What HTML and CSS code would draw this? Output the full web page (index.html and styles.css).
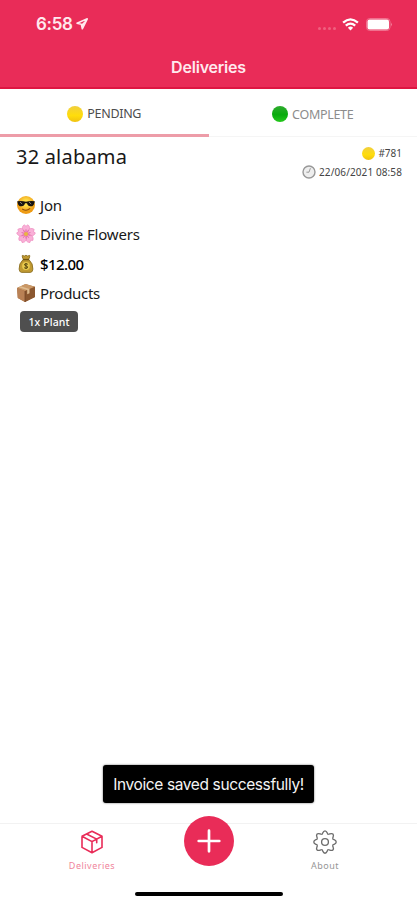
FILE: index.html
```html
<!DOCTYPE html>
<html lang="en">
<head>
<meta charset="utf-8">
<title>Deliveries</title>
<link rel="stylesheet" href="styles.css">
</head>
<body>
<div class="app">
  <header class="header">
    <div class="status">
      <span class="time">6:58</span>
      <svg class="location" width="12" height="12" viewBox="0 0 12 12"><path d="M11.3.8 1 5.3l4.3 1 1 4.5z" fill="none" stroke="#ffe9ee" stroke-width="1.5" stroke-linejoin="round"/><path d="M11 1 5.6 6.2 6.4 10.4z" fill="#ffe9ee"/></svg>
      <span class="signal"><i></i><i></i><i></i><i></i></span>
      <svg class="wifi" width="17" height="13" viewBox="0 0 17 13"><g fill="none" stroke="#fff" stroke-width="2.3"><path d="M1.1 4.7Q8.5-1.9 15.9 4.7"/><path d="M3.8 7.7Q8.5 3.6 13.2 7.7"/></g><path d="M5.9 9.7Q8.5 7.5 11.1 9.7L8.5 12.5z" fill="#fff"/></svg>
      <svg class="battery" width="27" height="13" viewBox="0 0 27 13"><rect x=".5" y=".5" width="23.5" height="12" rx="3.2" fill="none" stroke="#f0708e"/><rect x="1.5" y="1.5" width="21.5" height="10" rx="2" fill="#fff"/><path d="M25.2 4.6q1.5 1.9 0 3.8z" fill="#f6a0b3"/></svg>
    </div>
    <h1 class="title">Deliveries</h1>
  </header>

  <nav class="tabs">
    <div class="tab active"><span class="dot yellow"></span><span>PENDING</span></div>
    <div class="tab"><span class="dot green"></span><span>COMPLETE</span></div>
  </nav>

  <main class="order">
    <div class="order-head">
      <h2 class="address"><span>32 alabama</span></h2>
      <div class="meta">
        <div class="meta-row"><span class="dot small yellow"></span><span class="number">#781</span></div>
        <div class="meta-row"><svg width="14" height="14" viewBox="0 0 14 14"><circle cx="7" cy="7" r="6" fill="#eee" stroke="#989898" stroke-width="1.4"/><path d="M8.4 3.2 7 7.2H4.4" fill="none" stroke="#888" stroke-width=".8"/></svg><span class="date">22/06/2021 08:58</span></div>
      </div>
    </div>
    <ul class="details">
      <li>
        <svg width="20" height="20" viewBox="0 0 20 20"><defs><radialGradient id="face" cy=".38"><stop offset=".3" stop-color="#ffdf48"/><stop offset="1" stop-color="#ee9b14"/></radialGradient></defs><circle cx="10" cy="10" r="9" fill="url(#face)"/><path d="M1.2 6.3Q5.5 5.3 10 6.7 14.5 5.3 18.8 6.3L18.3 8.2Q17.5 11.6 14.5 11.3 11.7 11.2 11 8.3H9Q8.3 11.2 5.5 11.3 2.5 11.6 1.7 8.2z" fill="#17130f"/><path d="m4 7 2.2 2M13 7l2.2 2" stroke="#8d8a80"/><path d="M6.6 14.2Q10.5 16.5 13.8 13.7" fill="none" stroke="#8a4a0a" stroke-width="1.1" stroke-linecap="round"/></svg>
        <span class="name">Jon</span>
      </li>
      <li>
        <svg width="20" height="20" viewBox="0 0 20 20"><defs><path id="petal" d="M10 10C5.5 7 5.3 2.7 8.2.8L10 2.2 11.8.8C14.7 2.7 14.5 7 10 10z" fill="#f9b0d7" stroke="#ed83bb" stroke-width=".6"/></defs><use href="#petal"/><use href="#petal" transform="rotate(72 10 10)"/><use href="#petal" transform="rotate(144 10 10)"/><use href="#petal" transform="rotate(216 10 10)"/><use href="#petal" transform="rotate(288 10 10)"/><path d="M10 5.4v9.2M5.6 8.5l8.8 3M14.4 8.5l-8.8 3M7.3 13.7l5.4-7.4M12.7 13.7 7.3 6.3" stroke="#d44e92" stroke-width=".7"/><circle cx="10" cy="10" r="2.1" fill="#e9b544"/></svg>
        <span class="shop">Divine Flowers</span>
      </li>
      <li>
        <svg width="20" height="20" viewBox="0 0 20 20"><path d="M7.3 5.3Q5.8 2.7 6.3 1.4L8.5 2 10 1.2 11.5 2l2.2-.6q.5 1.3-1 3.9 4.6 4.3 4.2 9.8-.3 3.3-2.5 3.3H5.6q-2.2 0-2.5-3.3Q2.7 9.6 7.3 5.3z" fill="#c09a32" stroke="#846719" stroke-width=".8"/><path d="M7 5.6h6" stroke="#725612" stroke-width="1.4"/><circle cx="10" cy="12" r="3.9" fill="#e8c94d"/><path d="M11.8 10.3q-1.5-1.1-3-.3-.9 1.3 1.2 1.9 2.4.6 1.4 2-1.6 1-3.2-.2M10 9v6" fill="none" stroke="#57470f" stroke-width="1"/></svg>
        <span class="price">$12.00</span>
      </li>
      <li>
        <svg width="20" height="20" viewBox="0 0 20 20"><path d="M1 5 9.5 1 19 3.7V14L9 19 1.8 15z" fill="#a86f42"/><path d="M1 5 9.5 1 19 3.7 9 8z" fill="#ca9866"/><path d="M1 5 9 8v11l-7.2-4z" fill="#b98155"/><path d="M9 8 19 3.7V14L9 19z" fill="#8b5730"/><path d="M4.6 3.3 13.5 6v4.2l-2.3 1V7L2.7 4.2z" fill="#e0bd91"/><path d="M9 8v11" stroke="#6d4122" stroke-width=".7"/></svg>
        <span class="products">Products</span>
      </li>
    </ul>
    <span class="chip"><span>1x Plant</span></span>
  </main>

  <footer class="tabbar">
    <div class="nav-item current">
      <svg width="24" height="24" viewBox="0 0 24 24" fill="none" stroke="currentColor" stroke-width="1.6" stroke-linejoin="round" stroke-linecap="round"><path d="M12 1.2 22 6.3V17.4L12 22.8 2 17.4V6.3zM2 6.3 12 11.6 22 6.3M12 11.6V22.8M6.6 4 16.7 9.1V12.7"/></svg>
      <span>Deliveries</span>
    </div>
    <div class="nav-item middle"></div>
    <div class="nav-item about">
      <svg width="24" height="24" viewBox="-12 -12 24 24" fill="none" stroke="currentColor" stroke-width="1.35"><defs><path id="tooth" d="M-3.2-7.7C-2.1-8.15-2.3-11.2 0-11.2S2.1-8.15 3.2-7.7"/></defs><use href="#tooth"/><use href="#tooth" transform="rotate(45)"/><use href="#tooth" transform="rotate(90)"/><use href="#tooth" transform="rotate(135)"/><use href="#tooth" transform="rotate(180)"/><use href="#tooth" transform="rotate(225)"/><use href="#tooth" transform="rotate(270)"/><use href="#tooth" transform="rotate(315)"/><circle r="3.4"/></svg>
      <span>About</span>
    </div>
    <button class="fab" aria-label="Add"><svg width="24" height="24" viewBox="0 0 24 24"><path d="M12 1.7v20.6M1.7 12h20.6" stroke="#fff" stroke-width="2.7" stroke-linecap="round"/></svg></button>
    <div class="home"></div>
  </footer>
  <div class="toast"><span>Invoice saved successfully!</span></div>
</div>
</body>
</html>
```
FILE: styles.css
```css
* { box-sizing: border-box; }
body { margin: 0; background: #fff; font-family: "Noto Sans", sans-serif; }
svg { display: block; flex: none; }
.app { position: relative; width: 417px; height: 900px; display: flex; flex-direction: column; overflow: hidden; }

.header { height: 89px; background: #e92c58; border-bottom: 2px solid #de1642; color: #ffe9ee; flex: none; }
.status { display: flex; align-items: center; height: 48px; padding: 0 25px 0 36px; }
.time { font: 600 17px/20px Inter, sans-serif; letter-spacing: -.3px; }
.location { margin-left: 3px; }
.signal { display: flex; gap: 2px; margin: 8px 6px 0 auto; }
.signal i { width: 3px; height: 3px; border-radius: 50%; background: #f0607f; }
.wifi { margin-right: 7px; }
.battery { margin-right: -1px; }
.title { margin: 9px 0 0; text-align: center; font: 600 16px/20px Inter, sans-serif; letter-spacing: -.2px; }

.tabs { display: flex; height: 48px; flex: none; border-bottom: 1px solid #f5f5f5; }
.tab { flex: 1; display: flex; align-items: center; justify-content: center; gap: 4px; color: #8c8c8c; font-size: 12.5px; padding-top: 3px; letter-spacing: -.3px; }
.tab.active { color: #4d4d4d; border-bottom: 3px solid #ed9ca8; margin-bottom: -1px; padding-top: 4px; }
.dot { width: 16px; height: 16px; border-radius: 50%; flex: none; }
.yellow { background: linear-gradient(#f1cf3e, #ffdd0b 60%, #f0c211); }
.green { background: linear-gradient(#2fab2f, #08ab0c 55%, #25c81d); }
.dot.small { width: 13px; height: 13px; }

.order { flex: 1; padding: 7px 16px 0; color: #181818; }
.order-head { display: flex; justify-content: space-between; height: 46px; }
.address { margin: 0; font-size: 20px; line-height: 25px; font-weight: 400; letter-spacing: .2px; }
.meta { display: flex; flex-direction: column; align-items: flex-end; font-size: 10px; color: #444; margin-right: -1px; }
.meta-row { display: flex; align-items: center; gap: 3px; height: 18.5px; }
.date { letter-spacing: .1px; }
.details { list-style: none; margin: 0; padding: 0; font-size: 15px; letter-spacing: -.15px; }
.details li { display: flex; align-items: center; gap: 4px; height: 29.5px; }
.products { letter-spacing: -.3px; }
.price { font-weight: 500; color: #000; letter-spacing: -.6px; }
.chip { display: flex; align-items: center; justify-content: center; width: 58px; height: 21px; margin: 3px 0 0 4px; border-radius: 4px; background: #4f4f4f; color: #fff; font-size: 10.5px; font-weight: 500; letter-spacing: .1px; }

.tabbar { position: relative; display: flex; flex-wrap: wrap; height: 77px; flex: none; border-top: 1px solid #f2f2f2; }
.nav-item { height: 49px; display: flex; flex-direction: column; align-items: center; padding-top: 6px; gap: 5px; font: 9px/13px "Noto Sans", sans-serif; letter-spacing: .5px; color: #969696; }
.nav-item.current { width: 184px; color: #e92c58; }
.current span { color: #f0849b; }
.nav-item.middle { width: 49px; }
.nav-item.about { width: 184px; }
.about svg { color: #6c6c6c; }
.fab { position: absolute; left: 184px; top: -8px; width: 50px; height: 50px; padding: 0; border: 0; border-radius: 50%; background: #e92c58; display: grid; place-items: center; }
.home { width: 148px; height: 4px; border-radius: 2px; background: #000; margin: 14px auto 0; }
.toast { position: absolute; left: 103px; top: 765px; width: 211px; height: 38px; padding-top: 1px; border-radius: 3px; background: #000; box-shadow: 0 0 2px #555; color: #f4f4f4; display: flex; align-items: center; justify-content: center; font: 15.5px/20px Inter, sans-serif; letter-spacing: -.38px; white-space: nowrap; }
```
